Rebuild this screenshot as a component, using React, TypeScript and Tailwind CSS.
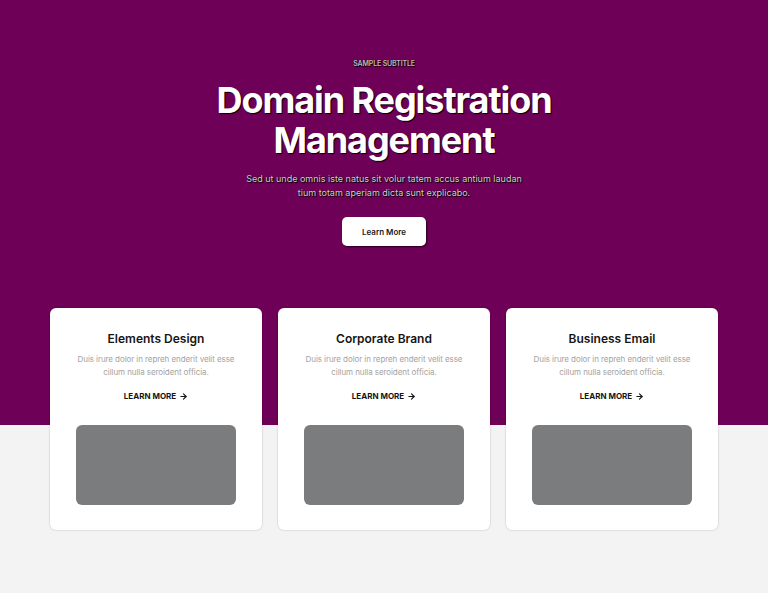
import { ArrowRight } from 'lucide-react';
import React from 'react';

interface Service {
    id: number;
    title: string;
    text: string;
}

const services: Service[] = [
    { id: 1, title: 'Elements Design', text: 'Duis irure dolor in repreh enderit velit esse cillum nulla seroident officia.' },
    { id: 2, title: 'Corporate Brand', text: 'Duis irure dolor in repreh enderit velit esse cillum nulla seroident officia.' },
    { id: 3, title: 'Business Email', text: 'Duis irure dolor in repreh enderit velit esse cillum nulla seroident officia.' },
];

export default function App() {
    return (
        <div
            className="min-h-screen bg-[#f3f3f3] bg-[linear-gradient(to_bottom,#6f0058_425px,#f3f3f3_425px)] font-['Inter',sans-serif]"
        >
            <div className="flex flex-col items-center pt-[60px] text-center">
                <p className="text-[7px] font-semibold uppercase leading-[8px] tracking-[-0.02em] text-[#bdbdbd] [text-shadow:1px_1px_1px_#000,0_0_1px_#000]">
                    Sample Subtitle
                </p>
                <h1 className="mt-[12px] text-[36px] font-bold leading-[40px] tracking-[-0.03em] text-white [text-shadow:1px_1px_1px_#000]">
                    Domain Registration
                    <br />
                    Management
                </h1>
                <p className="mt-[12px] max-w-[280px] text-[9px] leading-[14px] text-[#cfcfcf] [text-shadow:1px_1px_1px_#000,0_0_1px_#000]">
                    Sed ut unde omnis iste natus sit volur tatem accus antium laudan tium totam aperiam dicta sunt explicabo.
                </p>
                <button className="mt-[17px] h-[29px] w-[84px] rounded-[5px] bg-white text-[8px] font-semibold text-[#1a1a1a] shadow-[1px_1px_2px_rgba(0,0,0,0.7)]">
                    Learn More
                </button>
            </div>

            <div className="mx-auto mt-[62px] grid w-[668px] grid-cols-3 gap-4 pb-[63px]">
                {services.map(service => (
                    <div
                        key={service.id}
                        className="flex flex-col items-center rounded-[6px] bg-white px-[26px] pt-[23px] pb-[25px] text-center shadow-[0_0_2px_rgba(0,0,0,0.25)]"
                    >
                        <h3 className="text-[12px] font-semibold leading-[16px] text-[#151515]">{service.title}</h3>
                        <p className="mt-[6px] -mx-[4px] text-[8px] leading-[13px] tracking-[-0.01em] text-[#a3a3a3]">{service.text}</p>
                        <a className="mt-[12px] flex items-center gap-[3px] text-[8px] font-bold leading-[10px] text-[#151515]">
                            LEARN MORE
                            <ArrowRight className="h-[9px] w-[9px]" strokeWidth={3} />
                        </a>
                        <div className="mt-[24px] h-[80px] w-full rounded-[6px] bg-[#7b7c7e]" />
                    </div>
                ))}
            </div>
        </div>
    );
}
